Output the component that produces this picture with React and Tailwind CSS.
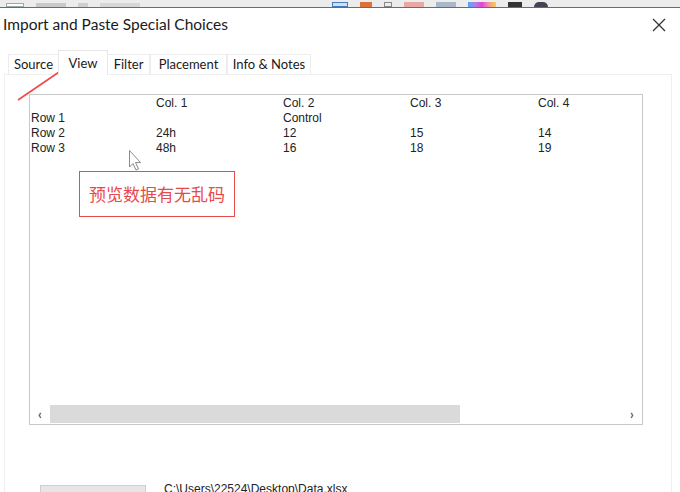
const rows = [
  ['', 'Col. 1', 'Col. 2', 'Col. 3', 'Col. 4'],
  ['Row 1', '', 'Control', '', ''],
  ['Row 2', '24h', '12', '15', '14'],
  ['Row 3', '48h', '16', '18', '19'],
]

const tabs = [
  { label: 'Source', w: 'w-[51px]' },
  { label: 'View', w: 'w-[50px]' },
  { label: 'Filter', w: 'w-[43px]' },
  { label: 'Placement', w: 'w-[77px]' },
  { label: 'Info & Notes', w: 'w-[84px]' },
]

function TopStrip() {
  return (
    <div className="flex h-[8px] items-end gap-3 border-b border-[#6b6b6b] bg-[#ececec] pl-[6px]">
      <div className="h-[4px] w-[18px] border border-[#9aa] bg-white" />
      <div className="h-[4px] w-[30px] bg-[#c9c9c9]" />
      <div className="h-[4px] w-[10px] bg-[#cfcfcf]" />
      <div className="h-[4px] w-[40px] bg-[#d6d6d6]" />
      <div className="ml-[180px] h-[5px] w-[16px] border border-[#4a7bbf] bg-[#cfe0f5]" />
      <div className="h-[5px] w-[12px] bg-[#d9733a]" />
      <div className="h-[5px] w-[8px] border border-[#888]" />
      <div className="h-[5px] w-[20px] bg-[#e8a9a4]" />
      <div className="h-[5px] w-[20px] bg-[#a9b7c9]" />
      <div className="h-[5px] w-[28px] bg-gradient-to-r from-[#39a8f0] via-[#e53ad6] to-[#f7d21a]" />
      <div className="h-[5px] w-[14px] bg-[#333]" />
      <div className="h-[5px] w-[14px] rounded-t-full bg-[#445]" />
    </div>
  )
}

function Tabs() {
  return (
    <div className="flex items-end pl-[8px] font-['Lato',sans-serif]">
      {tabs.map((t) =>
        t.label === 'View' ? (
          <div
            key={t.label}
            className={`relative z-10 -mx-[1px] flex h-[25px] ${t.w} justify-center border border-b-0 border-[#e6e6e6] bg-white pt-[3px] text-[13px] text-[#1a1a1a]`}
          >
            {t.label}
          </div>
        ) : (
          <div
            key={t.label}
            className={`flex h-[21px] ${t.w} items-center justify-center border border-b-0 border-[#ededed] text-[13px] text-[#1a1a1a]`}
          >
            {t.label}
          </div>
        )
      )}
    </div>
  )
}

function Preview() {
  return (
    <div className="ml-[24px] mt-[19px] flex h-[331px] w-[614px] flex-col border border-[#c9c9c9] bg-white">
      <div className="flex-1 pt-[1px] font-['Liberation_Sans',sans-serif] text-[12px] leading-[15px] text-[#222]">
        {rows.map((r, i) => (
          <div key={i} className="flex">
            <div className="w-[126px] pl-[1px]">{r[0]}</div>
            <div className="w-[127px]">{r[1]}</div>
            <div className="w-[127px]">{r[2]}</div>
            <div className="w-[128px]">{r[3]}</div>
            <div>{r[4]}</div>
          </div>
        ))}
      </div>
      <div className="mb-[1px] flex h-[18px] items-center">
        <div className="flex w-[20px] items-center justify-center text-[13px] font-bold leading-none text-[#555]">‹</div>
        <div className="h-[18px] w-[410px] bg-[#dadada]" />
        <div className="flex-1" />
        <div className="flex w-[20px] items-center justify-center text-[13px] font-bold leading-none text-[#555]">›</div>
      </div>
    </div>
  )
}

export default function App() {
  return (
    <div className="relative h-[492px] w-[680px] overflow-hidden bg-white font-['Lato',sans-serif]">
      <TopStrip />
      <div className="flex h-[34px] items-center justify-between pl-[3px] pr-[14px]">
        <div className="text-[15.5px] text-[#1a1a1a]">Import and Paste Special Choices</div>
        <svg width="14" height="14" viewBox="0 0 14 14" className="text-[#333]">
          <path d="M1 1 L13 13 M13 1 L1 13" stroke="currentColor" strokeWidth="1.3" />
        </svg>
      </div>
      <div className="mt-[8px]">
        <Tabs />
        <div className="mx-[4px] -mt-[1px] h-[420px] w-[668px] border border-[#efefef] bg-white">
          <Preview />
          <div className="ml-[35px] mt-[60px] flex items-start gap-[18px]">
            <div className="h-[30px] w-[106px] border border-[#cfcfcf] bg-[#e6e6e6]" />
            <div className="-mt-[5px] font-['Liberation_Sans',sans-serif] text-[12px] text-[#222]">C:\Users\22524\Desktop\Data.xlsx</div>
          </div>
        </div>
      </div>

      {/* annotation */}
      <div className="absolute left-[79px] top-[171px] flex h-[46px] w-[156px] items-center justify-center border border-[#e84b4b] font-['Noto_Sans_CJK_SC',sans-serif] text-[17px] text-[#e8494a]">
        预览数据有无乱码
      </div>
      <svg className="absolute left-0 top-0" width="680" height="492">
        <line x1="18" y1="100" x2="73" y2="62.5" stroke="#ef4a48" strokeWidth="1.6" />
        <path d="M81 57 L74.3 66.6 L69.7 60 Z" fill="#ef4a48" />
        <path
          d="M129.5 150.5 L129.5 167 L133 163.5 L136 170 L138.5 169 L135.5 162.5 L140.5 162.5 Z"
          fill="white"
          stroke="#8a8a8a"
          strokeWidth="1"
        />
      </svg>
    </div>
  )
}
